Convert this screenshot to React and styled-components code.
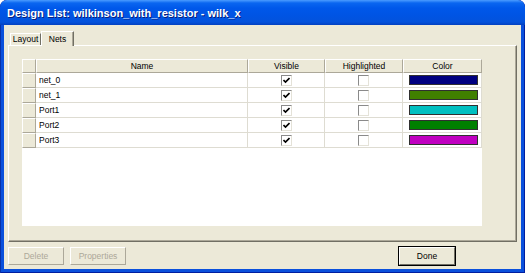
import React from 'react';
import styled, { createGlobalStyle } from 'styled-components';

const GlobalStyle = createGlobalStyle`
  body {
    margin: 0;
    font-family: 'Liberation Sans', Arial, sans-serif;
    font-size: 8.5px;
    color: #000000;
    background: #ffffff;
  }
`;

const COLUMNS = '14px 212px 77px 78px 79px';

const Window = styled.div`
  width: 525px;
  height: 273px;
  box-sizing: border-box;
  display: flex;
  flex-direction: column;
  background: #0a50dc;
  border-radius: 7px 7px 0 0;
  padding: 0 4px 4px;
  box-shadow: inset 1px 0 0 #0831a8, inset -1px 0 0 #001ea0, inset 0 -1px 0 #001ea0;
  overflow: hidden;
`;

const TitleBar = styled.div`
  height: 25px;
  margin: 0 -4px;
  display: flex;
  align-items: center;
  padding-left: 7px;
  border-radius: 7px 7px 0 0;
  background: linear-gradient(to bottom, #4b9cff 0px, #0a66f0 3px, #0058ea 8px, #0054e3 16px, #0352dc 22px, #0340c0 25px);
`;

const Title = styled.span`
  font-family: 'Liberation Sans', Arial, sans-serif;
  font-weight: bold;
  font-size: 11px;
  color: #ffffff;
  text-shadow: 1px 1px 0 #0a1e7a;
  margin-top: 1px;
`;

const Body = styled.div`
  flex: 1;
  display: flex;
  flex-direction: column;
  background: #ece9d8;
  padding: 6px 4px 4px;
`;

const Tabs = styled.div`
  display: flex;
  align-items: flex-end;
  height: 14px;
  margin-left: 2px;
  position: relative;
  z-index: 1;
`;

const Tab = styled.div`
  box-sizing: border-box;
  width: ${p => p.width}px;
  height: ${p => (p.active ? '15px' : '12px')};
  margin-bottom: ${p => (p.active ? '-1px' : '0')};
  display: flex;
  align-items: center;
  justify-content: center;
  background: #ece9d8;
  border-top: 1px solid #ffffff;
  border-left: 1px solid #ffffff;
  border-right: 1px solid #716f64;
  box-shadow: ${p => (p.active ? 'inset -1px 0 0 #aca899' : 'none')};
  font-size: 8.5px;
  line-height: 1;
`;

const Panel = styled.div`
  height: 197px;
  box-sizing: border-box;
  border-top: 1px solid #ffffff;
  border-left: 1px solid #ffffff;
  border-right: 1px solid #716f64;
  border-bottom: 1px solid #716f64;
  box-shadow: inset -1px -1px 0 #aca899;
  padding: 13px 34px 15px 13px;
  display: flex;
`;

const Grid = styled.div`
  flex: 1;
  display: flex;
  flex-direction: column;
  background: #ffffff;
`;

const Row = styled.div`
  display: grid;
  grid-template-columns: ${COLUMNS};
  height: ${p => (p.header ? '14px' : '15px')};
`;

const HeaderCell = styled.div`
  box-sizing: border-box;
  background: #ece9d8;
  border-top: 1px solid #ffffff;
  border-left: 1px solid #ffffff;
  border-right: 1px solid #aca899;
  border-bottom: 1px solid #aca899;
  display: flex;
  align-items: center;
  justify-content: center;
  line-height: 1;
`;

const RowHead = styled.div`
  box-sizing: border-box;
  background: #ece9d8;
  border-top: 1px solid #ffffff;
  border-left: 1px solid #ffffff;
  border-right: 1px solid #aca899;
  border-bottom: 1px solid #aca899;
`;

const Cell = styled.div`
  box-sizing: border-box;
  border-right: 1px solid #dedcd2;
  border-bottom: 1px solid #dedcd2;
  display: flex;
  align-items: center;
  justify-content: ${p => (p.center ? 'center' : 'flex-start')};
  padding-left: ${p => (p.center ? '0' : '3px')};
  line-height: 1;
`;

const Check = styled.span`
  box-sizing: border-box;
  width: 11px;
  height: 11px;
  border-top: 1px solid #8a8a8a;
  border-left: 1px solid #8a8a8a;
  border-right: 1px solid #e4e2d8;
  border-bottom: 1px solid #e4e2d8;
  background: #ffffff;
  display: flex;
  align-items: center;
  justify-content: center;
`;

const Swatch = styled.span`
  box-sizing: border-box;
  width: 69px;
  height: 10px;
  margin-left: 3px;
  border: 1px solid #303030;
  background: ${p => p.color};
`;

const Filler = styled.div`
  flex: 1;
`;

const Footer = styled.div`
  display: flex;
  gap: 6px;
  margin-top: 5px;
  height: 18px;
`;

const Button = styled.button`
  box-sizing: border-box;
  width: 56px;
  height: 18px;
  padding: 0;
  font-family: 'Liberation Sans', Arial, sans-serif;
  font-size: 8.5px;
  color: ${p => (p.disabled ? '#aca899' : '#000000')};
  background: #ece9d8;
  border-top: 1px solid #ffffff;
  border-left: 1px solid #ffffff;
  border-right: 1px solid ${p => (p.disabled ? '#aca899' : '#716f64')};
  border-bottom: 1px solid ${p => (p.disabled ? '#aca899' : '#716f64')};
  outline: ${p => (p.primary ? '1px solid #000000' : 'none')};
  outline-offset: 0;
  margin-left: ${p => (p.push ? 'auto' : '0')};
  margin-right: ${p => (p.push ? '62px' : '0')};
`;

const CheckMark = () => (
  <svg width="7" height="7" viewBox="0 0 7 7">
    <path d="M0.5 3 L2.5 5 L6.5 1" fill="none" stroke="#000000" strokeWidth="1.6" />
  </svg>
);

const nets = [
  { name: 'net_0', color: '#000080' },
  { name: 'net_1', color: '#408000' },
  { name: 'Port1', color: '#00c0c0' },
  { name: 'Port2', color: '#008000' },
  { name: 'Port3', color: '#c000c0' },
];

function App() {
  return (
    <>
      <GlobalStyle />
      <Window>
        <TitleBar>
          <Title>Design List: wilkinson_with_resistor - wilk_x</Title>
        </TitleBar>
        <Body>
          <Tabs>
            <Tab width={31}>Layout</Tab>
            <Tab active width={33}>Nets</Tab>
          </Tabs>
          <Panel>
            <Grid>
              <Row header>
                <RowHead />
                <HeaderCell>Name</HeaderCell>
                <HeaderCell>Visible</HeaderCell>
                <HeaderCell>Highlighted</HeaderCell>
                <HeaderCell>Color</HeaderCell>
              </Row>
              {nets.map(net => (
                <Row key={net.name}>
                  <RowHead />
                  <Cell>{net.name}</Cell>
                  <Cell center>
                    <Check><CheckMark /></Check>
                  </Cell>
                  <Cell center>
                    <Check />
                  </Cell>
                  <Cell>
                    <Swatch color={net.color} />
                  </Cell>
                </Row>
              ))}
              <Filler />
            </Grid>
          </Panel>
          <Footer>
            <Button disabled>Delete</Button>
            <Button disabled>Properties</Button>
            <Button primary push>Done</Button>
          </Footer>
        </Body>
      </Window>
    </>
  );
}

export default App;
